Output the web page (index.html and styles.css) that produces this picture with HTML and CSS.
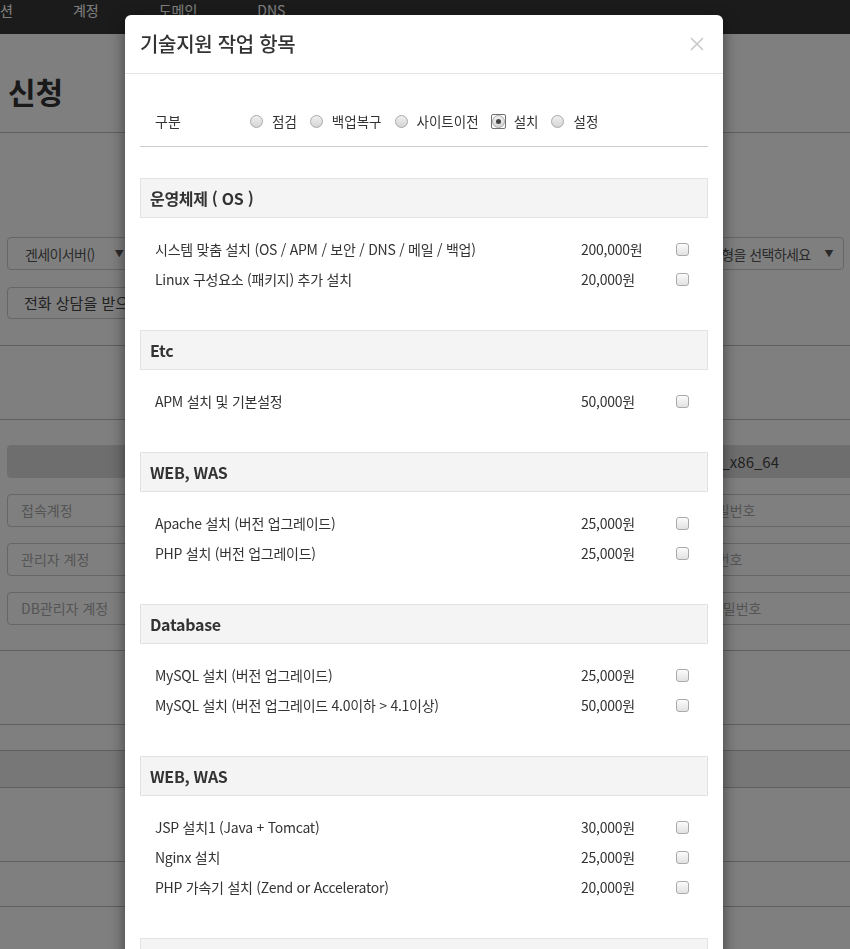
FILE: index.html
```html
<!DOCTYPE html>
<html lang="ko">
<head>
  <meta charset="UTF-8">
  <meta name="viewport" content="width=device-width, initial-scale=1.0">
  <title>신청</title>
  <link rel="stylesheet" href="styles.css">
</head>
<body>
  <nav class="topnav">
    <ul>
      <li>션</li>
      <li>계정</li>
      <li>도메인</li>
      <li>DNS</li>
    </ul>
  </nav>

  <div class="page">
    <h1 class="page-title">신청</h1>

    <div class="sec sec-server">
      <div class="select-row">
        <div class="fake-select">겐세이서버() <span class="caret">▼</span></div>
        <div class="fake-select">사용기간을 선택하세요 <span class="caret">▼</span></div>
        <div class="fake-select">운영체제 유형을 선택하세요 <span class="caret">▼</span></div>
      </div>
      <div class="phone-box">전화 상담을 받으실 번호를 입력하세요</div>
    </div>

    <div class="sec sec-blank"></div>

    <div class="sec sec-account">
      <div class="os-bar"><span>CentOS 7.x X_x86_64</span></div>
      <div class="acc-row"><div class="field">접속계정</div><div class="field">접속계정 비밀번호</div></div>
      <div class="acc-row"><div class="field">관리자 계정</div><div class="field">관리자 비밀번호</div></div>
      <div class="acc-row"><div class="field">DB관리자 계정</div><div class="field">DB관리자 비밀번호</div></div>
    </div>

    <div class="sec sec-t1"></div>
    <div class="sec sec-t2"></div>
    <div class="sec sec-t3"></div>
    <div class="sec sec-t1"></div>
    <div class="sec sec-t4"></div>
    <div class="sec sec-t1"></div>
  </div>

  <div class="backdrop"></div>

  <div class="modal">
    <div class="modal-header">
      <h4 class="modal-title">기술지원 작업 항목</h4>
      <span class="close">
        <svg width="14" height="14" viewBox="0 0 14 14"><path d="M1 1L13 13M13 1L1 13" stroke="#c9c9c9" stroke-width="1.6" fill="none"/></svg>
      </span>
    </div>

    <div class="modal-body">
      <div class="type-row">
        <span class="type-label">구분</span>
        <label class="opt"><span class="radio"></span>점검</label>
        <label class="opt"><span class="radio"></span>백업복구</label>
        <label class="opt"><span class="radio"></span>사이트이전</label>
        <label class="opt"><span class="radio checked"></span>설치</label>
        <label class="opt"><span class="radio"></span>설정</label>
      </div>

      <div class="group">
        <div class="group-head">운영체제 ( OS )</div>
        <div class="items">
          <div class="item"><span>시스템 맞춤 설치 (OS / APM / 보안 / DNS / 메일 / 백업)</span><span class="price">200,000원</span><span class="chk"></span></div>
          <div class="item"><span>Linux 구성요소 (패키지) 추가 설치</span><span class="price">20,000원</span><span class="chk"></span></div>
        </div>
      </div>

      <div class="group">
        <div class="group-head">Etc</div>
        <div class="items">
          <div class="item"><span>APM 설치 및 기본설정</span><span class="price">50,000원</span><span class="chk"></span></div>
        </div>
      </div>

      <div class="group">
        <div class="group-head">WEB, WAS</div>
        <div class="items">
          <div class="item"><span>Apache 설치 (버전 업그레이드)</span><span class="price">25,000원</span><span class="chk"></span></div>
          <div class="item"><span>PHP 설치 (버전 업그레이드)</span><span class="price">25,000원</span><span class="chk"></span></div>
        </div>
      </div>

      <div class="group">
        <div class="group-head">Database</div>
        <div class="items">
          <div class="item"><span>MySQL 설치 (버전 업그레이드)</span><span class="price">25,000원</span><span class="chk"></span></div>
          <div class="item"><span>MySQL 설치 (버전 업그레이드 4.0이하 &gt; 4.1이상)</span><span class="price">50,000원</span><span class="chk"></span></div>
        </div>
      </div>

      <div class="group">
        <div class="group-head">WEB, WAS</div>
        <div class="items">
          <div class="item"><span>JSP 설치1 (Java + Tomcat)</span><span class="price">30,000원</span><span class="chk"></span></div>
          <div class="item"><span>Nginx 설치</span><span class="price">25,000원</span><span class="chk"></span></div>
          <div class="item"><span>PHP 가속기 설치 (Zend or Accelerator)</span><span class="price">20,000원</span><span class="chk"></span></div>
        </div>
      </div>

      <div class="group">
        <div class="group-head">Mail</div>
        <div class="items">
          <div class="item"><span>Sendmail 설치</span><span class="price">25,000원</span><span class="chk"></span></div>
        </div>
      </div>
    </div>
  </div>
</body>
</html>
```

FILE: styles.css
```css
html, body {
  overflow: hidden;
}

body {
  margin: 0;
  background: #fff;
  color: #333;
  font-family: "Noto Sans CJK KR", "Noto Sans", sans-serif;
  font-size: 14px;
}

/* background page */
.topnav {
  height: 34px;
  overflow: hidden;
  background: #363636;
}

.topnav ul {
  display: flex;
  gap: 60px;
  margin: 0;
  padding: 0;
  list-style: none;
}

.topnav li {
  color: #fff;
  font-size: 14px;
  line-height: 20px;
}

.page-title {
  margin: 0;
  padding: 37px 8px 21px;
  font-size: 30px;
  line-height: 40px;
  font-weight: bold;
  color: #333;
  border-bottom: 1px solid #c0c0c0;
}

.sec {
  border-bottom: 1px solid #c0c0c0;
  padding: 0 6px 0 7px;
}

.sec-server {
  padding-top: 104px;
  padding-bottom: 26px;
}

.select-row {
  display: grid;
  grid-template-columns: 1fr 1fr 1fr;
  gap: 10px;
}

.fake-select {
  display: flex;
  align-items: center;
  gap: 20px;
  height: 31px;
  padding: 0 10px 0 17px;
  border: 1px solid #ccc;
  border-radius: 4px;
  color: #555;
  font-size: 14px;
  letter-spacing: -0.6px;
}

.fake-select:last-child {
  justify-content: flex-end;
  gap: 14px;
}

.caret {
  font-size: 9px;
}

.phone-box {
  width: 300px;
  height: 30px;
  margin-top: 17px;
  padding-left: 16px;
  border: 1px solid #ccc;
  border-radius: 4px;
  line-height: 30px;
  font-size: 15px;
  color: #444;
}

.sec-blank {
  height: 73px;
}

.sec-account {
  padding-top: 25px;
  padding-bottom: 25px;
  padding-right: 0;
}

.os-bar {
  display: flex;
  justify-content: flex-end;
  height: 33px;
  margin-right: -20px;
  padding-right: 91px;
  border-radius: 4px;
  background: #dcdcdc;
  line-height: 33px;
  font-size: 15px;
  color: #444;
}

.acc-row {
  display: grid;
  grid-template-columns: 1fr 1fr;
  gap: 10px;
  margin-top: 16px;
  margin-right: -20px;
}

.field {
  height: 31px;
  padding-left: 13px;
  border: 1px solid #ccc;
  border-radius: 4px;
  line-height: 31px;
  color: #aaa;
  font-size: 14px;
  white-space: nowrap;
}

.acc-row .field:last-child {
  padding-left: 204px;
}

.sec-t1 { height: 73px; }
.sec-t2 { height: 25px; }
.sec-t3 { height: 36px; background: #eee; }
.sec-t4 { height: 44px; }

.backdrop {
  position: fixed;
  inset: 0;
  z-index: 10;
  background: rgba(0, 0, 0, 0.5);
}

/* modal */
.modal {
  position: absolute;
  top: 15px;
  left: 125px;
  z-index: 20;
  width: 598px;
  background: #fff;
  border-radius: 6px;
  box-shadow: 0 5px 15px rgba(0, 0, 0, 0.5);
}

.modal-header {
  display: flex;
  justify-content: space-between;
  align-items: center;
  padding: 15px;
  border-bottom: 1px solid #e5e5e5;
}

.modal-title {
  margin: 0;
  font-size: 20px;
  line-height: 28px;
  font-weight: 500;
  color: #333;
  letter-spacing: -0.3px;
}

.close {
  display: flex;
  margin-right: 4px;
}

.modal-body {
  padding: 0 15px 15px;
}

.type-row {
  display: flex;
  align-items: center;
  padding: 37px 0 15px 15px;
  border-bottom: 1px solid #ccc;
  line-height: 20px;
  font-size: 13.5px;
}

.type-label {
  width: 95px;
  font-size: 14px;
}

.opt {
  display: inline-flex;
  align-items: center;
  gap: 9px;
  margin-right: 13px;
}

.radio {
  position: relative;
  width: 11px;
  height: 11px;
  border: 1px solid #a9a9a9;
  border-radius: 50%;
  background: linear-gradient(#f0f0f0, #d4d4d4);
}

.radio.checked::before {
  content: "";
  position: absolute;
  inset: -2px;
  border: 1px solid #6f6f6f;
  border-radius: 2px;
}

.radio.checked::after {
  content: "";
  position: absolute;
  top: 3px;
  left: 3px;
  width: 5px;
  height: 5px;
  border-radius: 50%;
  background: #444;
}

.group {
  margin-top: 31px;
}

.group + .group {
  margin-top: 20px;
}

.group-head {
  height: 38px;
  padding-left: 9px;
  border: 1px solid #e3e3e3;
  background: #f4f4f4;
  line-height: 38px;
  font-size: 16px;
  font-weight: bold;
  color: #333;
  letter-spacing: -0.3px;
}

.items {
  padding: 16px 0;
}

.item {
  display: grid;
  grid-template-columns: 1fr 95px 32px;
  align-items: center;
  height: 30px;
  padding-left: 15px;
  font-size: 14px;
  letter-spacing: -0.25px;
}

.chk {
  width: 11px;
  height: 11px;
  border: 1px solid #aaa;
  border-radius: 3px;
  background: linear-gradient(#fbfbfb, #e2e2e2);
}
```
